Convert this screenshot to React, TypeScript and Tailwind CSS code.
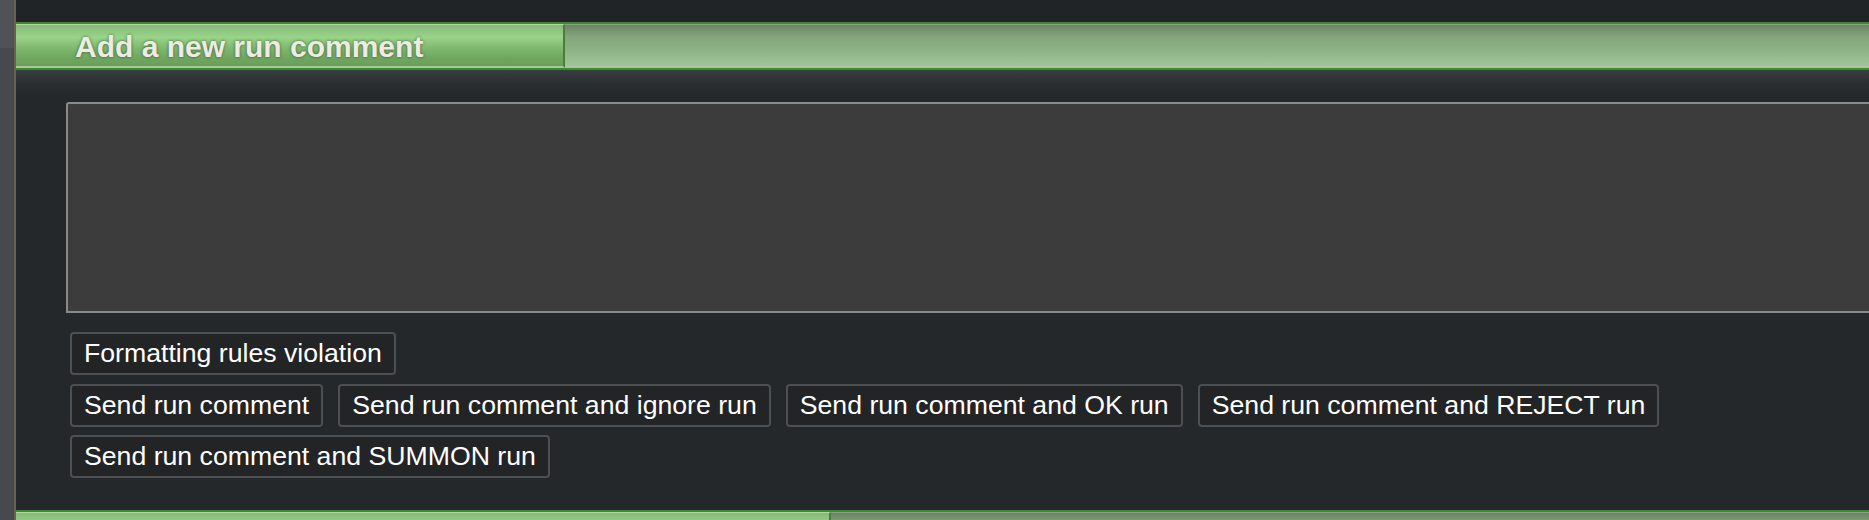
const sendButtons = [
  "Send run comment",
  "Send run comment and ignore run",
  "Send run comment and OK run",
  "Send run comment and REJECT run",
  "Send run comment and SUMMON run",
];

const ActionButton = ({ label }: { label: string }) => (
  <button className="h-[43px] px-[12px] flex items-center rounded-[4px] border-2 border-[#4d5053] bg-[#222426] text-white text-[26.67px] leading-none font-['Liberation_Sans',Arial,sans-serif] whitespace-nowrap">
    {label}
  </button>
);

const SectionHeader = ({ title, tabWidth }: { title?: string; tabWidth: string }) => (
  <div className="h-[48px] border-y-2 border-[#3b8c2e] flex flex-none">
    {/* Left tab */}
    <div
      className={`${tabWidth} flex-none flex items-center border-t border-b-2 border-t-[#b4d6a6] border-b-[#a9c6a0] border-r-2 border-r-[#4d7a42] bg-[linear-gradient(to_bottom,#86b877_0%,#9ad48a_30%,#80b970_55%,#6fa75f_80%,#6a9f5a_100%)]`}
    >
      {title && (
        <span className="pl-[59px] pt-[2px] text-[30px] font-bold leading-none text-[#ecece2] font-['Liberation_Sans',Arial,sans-serif] [text-shadow:0_0_3px_rgba(0,0,0,0.55)]">
          {title}
        </span>
      )}
    </div>
    {/* Remaining bar */}
    <div className="flex-1 border-t border-b-2 border-t-[#8e9a8a] border-b-[#a9c6a0] bg-[linear-gradient(to_bottom,#6a8661_0%,#86a67e_30%,#8bb083_55%,#99be91_85%,#a4c49c_100%)]" />
  </div>
);

export default function App() {
  return (
    <div className="w-full h-[520px] overflow-hidden flex bg-[#25282a]">
      {/* Left rail */}
      <div className="w-[16px] flex-none flex flex-col border-r-2 border-[#6b5f52]">
        <div className="h-[48px] bg-[#4f5357]" />
        <div className="flex-1 bg-[#46494d]" />
      </div>

      <div className="flex-1 min-w-0 flex flex-col overflow-hidden">
        <div className="h-[22px] flex-none bg-[#212426]" />

        <SectionHeader title="Add a new run comment" tabWidth="w-[549px]" />

        {/* Comment form */}
        <div className="h-[440px] flex-none pt-[32px] pl-[50px] bg-[linear-gradient(to_bottom,#3b3e41_0px,#2b2e30_14px,#25282a_28px)]">
          <textarea className="block w-[1850px] h-[211px] resize-none rounded-tl-[3px] border-2 border-[#8a8a8a] bg-[#3c3c3c] outline-none" />

          <div className="mt-[19px] pl-[4px] flex flex-col gap-[9px]">
            <div className="flex">
              <ActionButton label="Formatting rules violation" />
            </div>
            <div className="flex flex-wrap gap-x-[15px] gap-y-[8px]">
              {sendButtons.map((label) => (
                <ActionButton key={label} label={label} />
              ))}
            </div>
          </div>
        </div>

        <SectionHeader tabWidth="w-[815px]" />
      </div>
    </div>
  );
}
